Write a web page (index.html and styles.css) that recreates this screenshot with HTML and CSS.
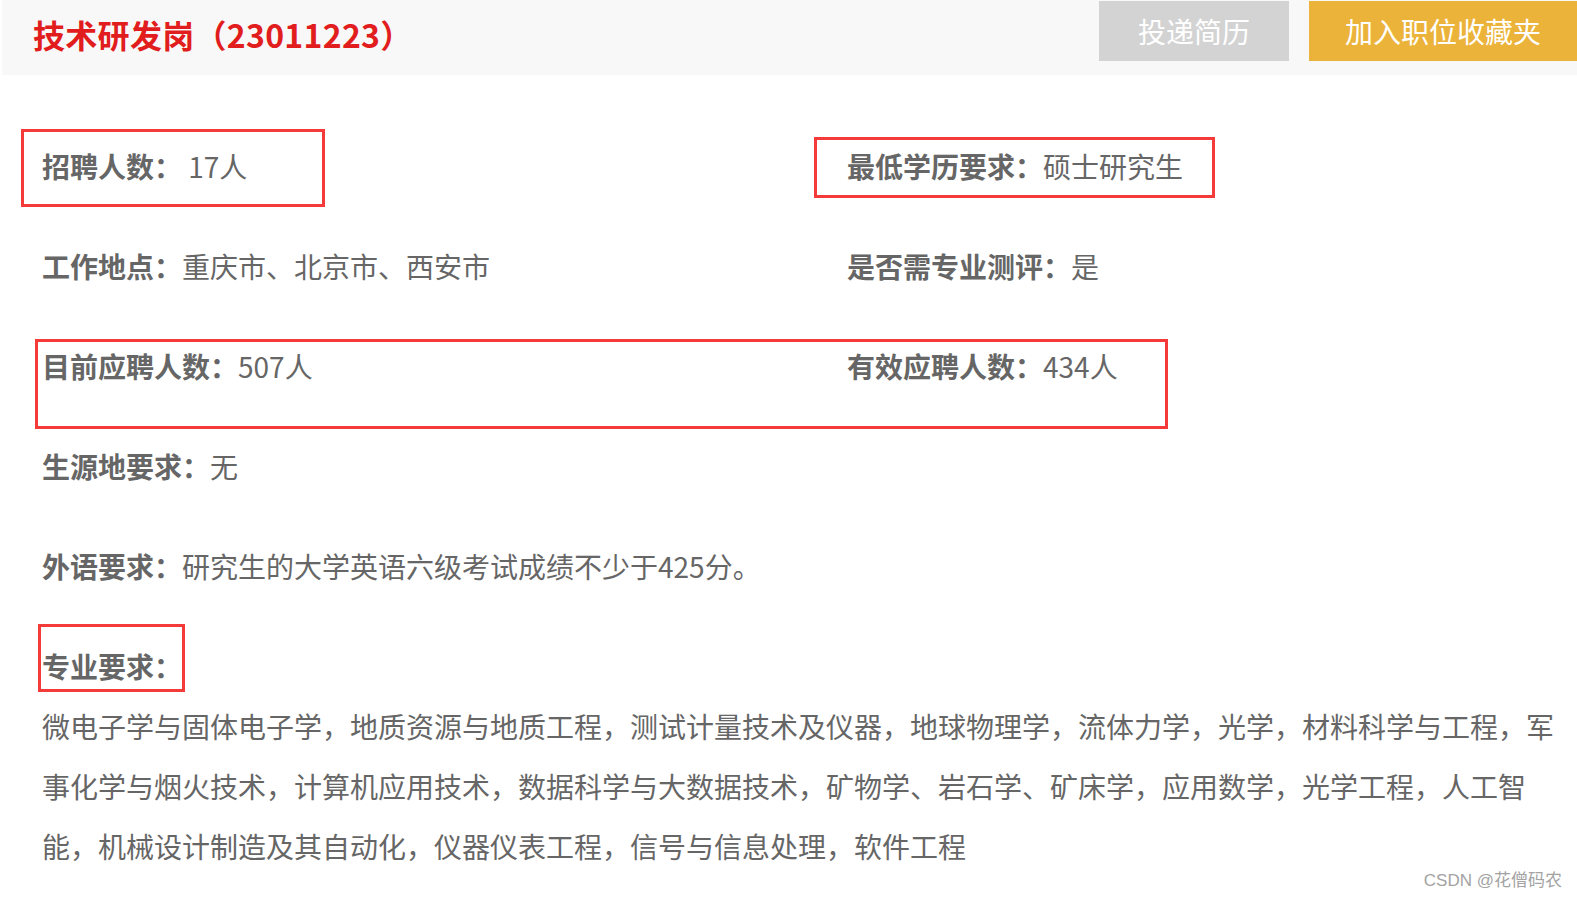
FILE: index.html
```html
<!DOCTYPE html>
<html lang="zh-CN">

<head>
    <meta charset="UTF-8">
    <meta name="viewport" content="width=device-width, initial-scale=1.0">
    <title>技术研发岗</title>

    <link rel="stylesheet" href="styles.css">
</head>

<body>
    <div class="job-head">
        <h2 class="job-title">技术研发岗（23011223）</h2>
        <div class="job-btns">
            <span class="btn btn-gray">投递简历</span>
            <span class="btn btn-yellow">加入职位收藏夹</span>
        </div>
    </div>

    <div class="job-info">
        <div class="info-grid">
            <div class="info-item"><b>招聘人数：</b> 17人</div>
            <div class="info-item"><b>最低学历要求：</b>硕士研究生</div>
            <div class="info-item"><b>工作地点：</b>重庆市、北京市、西安市</div>
            <div class="info-item"><b>是否需专业测评：</b>是</div>
            <div class="info-item"><b>目前应聘人数：</b>507人</div>
            <div class="info-item"><b>有效应聘人数：</b>434人</div>
            <div class="info-item"><b>生源地要求：</b>无</div>
            <div class="info-item"></div>
            <div class="info-item wide"><b>外语要求：</b>研究生的大学英语六级考试成绩不少于425分。</div>
        </div>
        <div class="major">
            <b class="major-label">专业要求：</b>
            <p class="major-text">微电子学与固体电子学，地质资源与地质工程，测试计量技术及仪器，地球物理学，流体力学，光学，材料科学与工程，军事化学与烟火技术，计算机应用技术，数据科学与大数据技术，矿物学、岩石学、矿床学，应用数学，光学工程，人工智能，机械设计制造及其自动化，仪器仪表工程，信号与信息处理，软件工程</p>
        </div>
    </div>

    <!-- 截图上的红框标注 -->
    <div class="mark mark1"></div>
    <div class="mark mark2"></div>
    <div class="mark mark3"></div>
    <div class="mark mark4"></div>

    <div class="watermark">CSDN @花僧码农</div>
</body>
</html>
```

FILE: styles.css
```css
body {
    margin: 0;
    background-color: #fff;
    font-family: "Noto Sans CJK SC", "Liberation Sans", sans-serif;
    color: #666;
    position: relative;
    min-height: 899px;
    overflow: hidden;
}

.job-head {
    margin-left: 2px;
    height: 75px;
    background-color: #f8f8f8;
    display: flex;
    justify-content: space-between;
    align-items: flex-start;
}
.job-title {
    margin: 0;
    padding-left: 31px;
    font-size: 32px;
    line-height: 68px;
    font-weight: bold;
    color: #e11d1d;
    letter-spacing: 0.3px;
}
.job-btns { display: flex; gap: 20px; margin-top: 1px; }
.btn {
    display: block;
    height: 60px;
    line-height: 60px;
    font-size: 28px;
    color: #fff;
    text-align: center;
}
.btn-gray { width: 190px; background-color: #d3d3d3; }
.btn-yellow { width: 268px; background-color: #ebb33a; }

.job-info { padding: 41px 0 0 42px; font-size: 28px; }
.info-grid {
    display: grid;
    grid-template-columns: 805px 1fr;
    grid-auto-rows: 100px;
}
.info-item { line-height: 100px; white-space: nowrap; }
.info-item b { font-weight: bold; }
.info-item.wide { grid-column: 1 / -1; }

.major { margin-top: 20px; }
.major-label { display: block; line-height: 60px; font-weight: bold; }
.major-text { margin: 0; width: 1520px; line-height: 60px; }

.mark {
    position: absolute;
    border: 3px solid #f53a3a;
    box-sizing: border-box;
    pointer-events: none;
}
.mark1 { left: 21px; top: 129px; width: 304px; height: 78px; }
.mark2 { left: 814px; top: 137px; width: 401px; height: 61px; }
.mark3 { left: 35px; top: 339px; width: 1133px; height: 90px; }
.mark4 { left: 38px; top: 624px; width: 147px; height: 68px; }

.watermark {
    position: absolute;
    right: 15px;
    bottom: 8px;
    font-family: "Liberation Sans", "Noto Sans CJK SC", sans-serif;
    font-size: 17px;
    line-height: 20px;
    color: #a3a3a3;
}
```
